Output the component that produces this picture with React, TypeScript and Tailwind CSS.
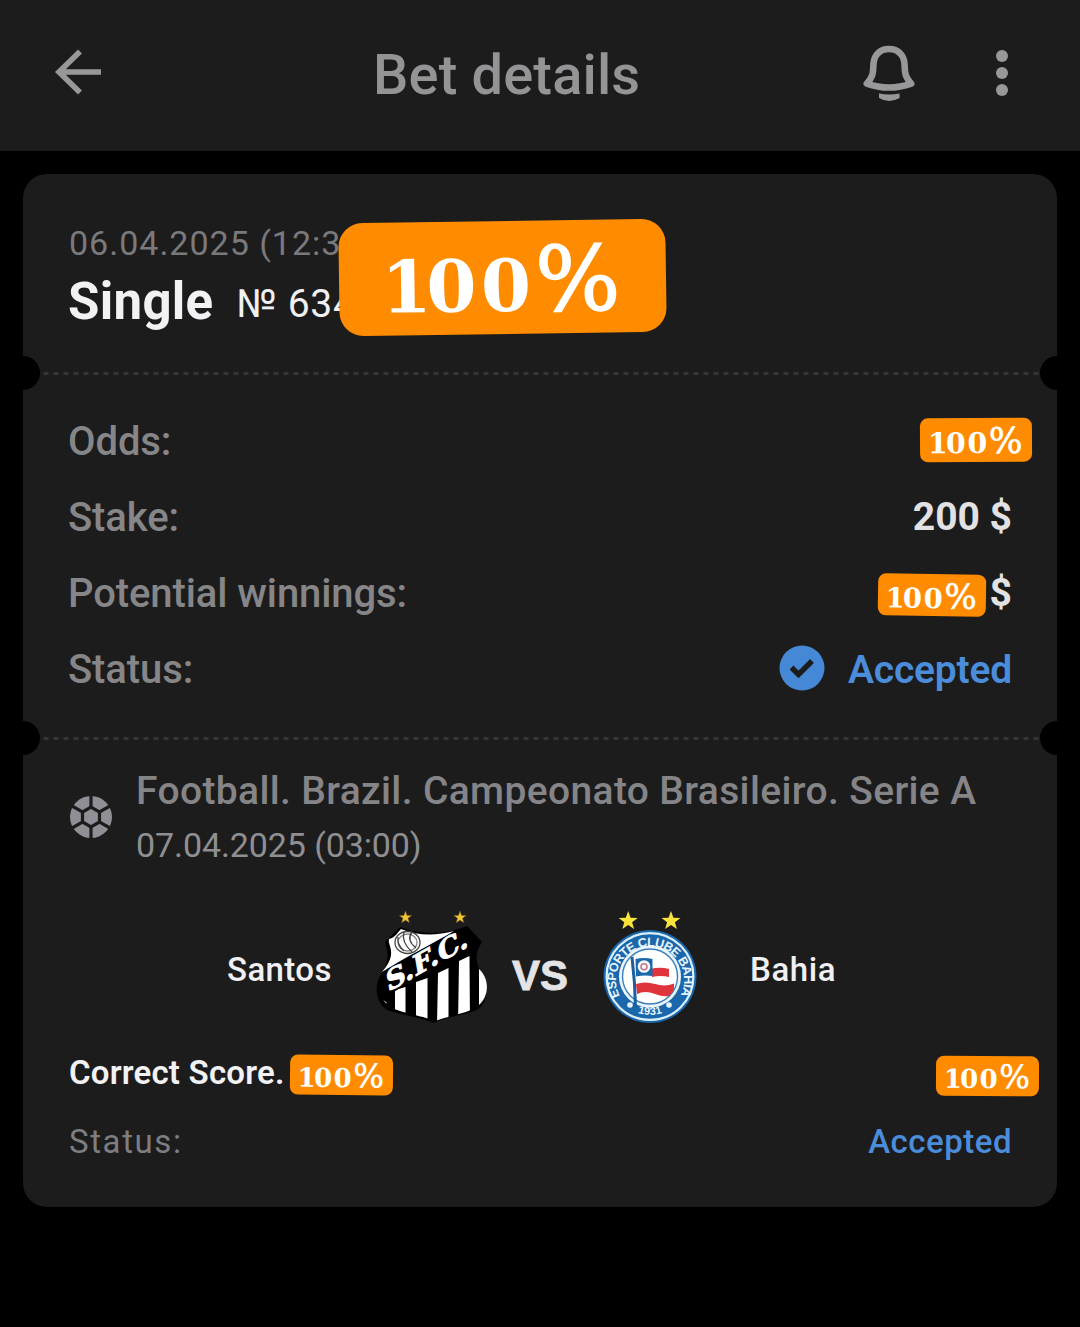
import React from "react";

const STAR = "M0,-10 L2.4,-3.2 9.5,-3.1 3.9,1.2 5.9,8.1 0,4 -5.9,8.1 -3.9,1.2 -9.5,-3.1 -2.4,-3.2 Z";

function HundredTag({ className }: { className: string }) {
  return (
    <div
      className={`flex items-center justify-center whitespace-nowrap bg-[#ff8c00] font-['DejaVu_Serif',serif] font-bold leading-none text-white ${className}`}
    >
      <span className="flex items-baseline pr-[0.05em] pt-[0.08em]">
        <span className="tracking-[-0.07em]">1</span>
        <span className="tracking-[0.06em]">00</span>
        <span className="text-[1.24em] font-normal leading-none [-webkit-text-stroke:0.018em_white]">%</span>
      </span>
    </div>
  );
}

function Divider() {
  return (
    <div className="flex h-[34px] items-center justify-between overflow-hidden">
      <div className="-ml-[17px] size-[34px] shrink-0 rounded-full bg-black" />
      <div className="mt-px h-[3px] flex-1 bg-[repeating-linear-gradient(90deg,transparent_0_3px,#353536_4px_8px,transparent_9px_10px)]" />
      <div className="-mr-[17px] size-[34px] shrink-0 rounded-full bg-black" />
    </div>
  );
}

function BackIcon() {
  return (
    <svg className="h-[48px] w-[48px]" viewBox="0 0 48 48" fill="none" stroke="#98989a" strokeWidth="5.6">
      <path d="M27 3.5 L6 24 L27 44.5 M6.5 24 H48" />
    </svg>
  );
}

function BellIcon() {
  return (
    <svg className="h-[60px] w-[56px]" viewBox="0 0 56 60" fill="none">
      <path
        d="M28 7 C18.5 7 12.6 13.5 12.4 23 C12.2 32.5 11.2 35.5 5.8 41.6 Q28 49.5 50.2 41.6 C44.8 35.5 43.8 32.5 43.6 23 C43.4 13.5 37.5 7 28 7 Z"
        stroke="#98989a"
        strokeWidth="6.6"
        strokeLinejoin="round"
      />
      <path d="M18 51.6 Q28 53.4 38.6 51.6 V56 Q28 62 18 56 Z" fill="#98989a" />
    </svg>
  );
}

function BallIcon() {
  return (
    <svg className="size-[44px]" viewBox="-22 -22 44 44">
      <circle r="21" fill="#8f8f95" />
      <g stroke="#1c1c1d" strokeWidth="3.2" fill="none">
        <path d="M0,-9.8 L8.5,-5 V5 L0,9.8 L-8.5,5 V-5 Z" />
        <path d="M0 -9.5 V-22 M0 9.5 V22 M8.2 -4.8 L19 -11 M8.2 4.8 L19 11 M-8.2 -4.8 L-19 -11 M-8.2 4.8 L-19 11" />
      </g>
    </svg>
  );
}

function SantosCrest() {
  return (
    <svg className="h-[130px] w-[120px]" viewBox="0 0 120 130">
      <defs>
        <clipPath id="santos-stripes">
          <path d="M13 99 L30 88 L60 73 L100 50 L101 68 C113 74 116 90 109 105 C100 113 82 115 65 121 C45 113 20 113 13 99 Z" />
        </clipPath>
      </defs>
      <path
        d="M30 27 C50 35 75 35 97 26 L112 42 C103 56 107 65 112 75 C120 92 116 104 107 110 C95 115 79 116 63 123 C47 116 30 115 17 110 C7 103 4 90 9 78 C16 66 19 60 17 50 L15 42 Z"
        fill="#000"
      />
      <path d="M31 29 C48 36 66 36 84 31 C62 44 36 57 12 72 C20 62 23 56 20 46 Q18 42 19 39 C26 37 27 33 31 29 Z" fill="#fff" />
      <g clipPath="url(#santos-stripes)" fill="#fff">
        <path d="M11 98 L17 103 L12 106 Z" />
        <path d="M25 90 L35.5 87 V124 H25 Z" />
        <path d="M46 82 L57.5 78 V126 H46 Z" />
        <path d="M68 73 L78.5 68 V126 H67 Z" />
        <path d="M89 61 L99.5 56 L100 126 H88 Z" />
      </g>
      <path d="M109 69 C119 78 120 95 109 105 Z" fill="#fff" />
      <g fill="none" stroke="#444" strokeWidth="1.3">
        <ellipse cx="37.5" cy="42.5" rx="12.5" ry="11" />
        <ellipse cx="37.5" cy="42.5" rx="9.5" ry="8.5" stroke="#888" />
        <path d="M34 32 Q31 42 42 52 M42 32 Q36 40 46 48 M28 37 Q27 45 34 51" />
      </g>
      <text
        transform="translate(18 92) rotate(-29.5) skewX(-20)"
        textLength="93"
        lengthAdjust="spacingAndGlyphs"
        fill="#fff"
        stroke="#fff"
        strokeWidth="0.8"
        fontFamily="'DejaVu Serif', serif"
        fontWeight="700"
        fontSize="26"
      >
        S.F.C.
      </text>
      <path d={STAR} fill="#f0c53a" stroke="#6b5412" strokeWidth="0.8" transform="translate(35.5 17.5) scale(.66)" />
      <path d={STAR} fill="#f0c53a" stroke="#6b5412" strokeWidth="0.8" transform="translate(90 17.5) scale(.66)" />
    </svg>
  );
}

function BahiaCrest() {
  return (
    <svg className="h-[130px] w-[110px]" viewBox="0 0 110 130">
      <defs>
        <path id="bahia-top" d="M25.8 97.7 A34 34 0 1 1 84.2 97.7" />
        <path id="bahia-bottom" d="M35 109.5 A40.5 40.5 0 0 0 75 109.5" />
        <clipPath id="bahia-flag">
          <circle cx="55" cy="77" r="27" />
        </clipPath>
      </defs>
      <circle cx="55" cy="76.5" r="46.5" fill="#1b67ab" />
      <circle cx="55" cy="76.5" r="43.4" fill="none" stroke="#d9f0fb" strokeWidth="2.2" />
      <circle cx="55" cy="76.5" r="31" fill="#e9f5fb" />
      <circle cx="55" cy="76.5" r="27.5" fill="#fff" stroke="#3f7fb5" strokeWidth="1.4" />
      <g clipPath="url(#bahia-flag)">
        <path d="M57 68.5 Q66 67 74 69 V77 Q66 75 57 77 Z" fill="#e0343c" />
        <path d="M41 84 Q50 81 60 84 T79 83.5 V95 Q70 98 60 94 T42 94 Z" fill="#e0343c" />
      </g>
      <path d="M40.5 59 Q49 57 57.5 59 V76 Q49 75 41 76.5 Z" fill="#1b67ab" />
      <circle cx="49" cy="66.5" r="6.3" fill="#f3f7fb" />
      <circle cx="49" cy="66.8" r="3" fill="none" stroke="#c8788c" strokeWidth="1.6" />
      <path d="M37 57 Q40 82 40.5 107" fill="none" stroke="#1b5f9e" strokeWidth="3" />
      <g fill="#e8f6fd" fontFamily="'Liberation Sans', sans-serif" fontWeight="700">
        <text fontSize="12.5" textLength="138">
          <textPath href="#bahia-top" startOffset="2">
            ESPORTE CLUBE BAHIA
          </textPath>
        </text>
        <text fontSize="11" textAnchor="middle">
          <textPath href="#bahia-bottom" startOffset="50%">
            1931
          </textPath>
        </text>
      </g>
      <circle cx="35" cy="105" r="2.8" fill="#e8f6fd" />
      <circle cx="74" cy="105" r="2.8" fill="#e8f6fd" />
      <path d={STAR} fill="#fbe43a" transform="translate(33.2 21)" />
      <path d={STAR} fill="#fbe43a" transform="translate(76 21)" />
    </svg>
  );
}

function DetailRow({ label, children }: { label: string; children: React.ReactNode }) {
  return (
    <div className="flex h-[76px] items-center justify-between">
      <span className="text-[40px] font-medium leading-[76px] tracking-[-0.1px] text-[#868688]">{label}</span>
      {children}
    </div>
  );
}

export default function App() {
  return (
    <div className="h-[1327px] w-[1080px] overflow-hidden bg-black font-[Roboto,sans-serif]">
      <header className="flex h-[151px] items-start bg-[#1c1c1d] pl-[53px]">
        <div className="mt-[48px] w-[320px]">
          <BackIcon />
        </div>
        <h1 className="mt-[39px] w-[488px] text-[56px] font-medium leading-[72px] tracking-[0.15px] text-[#949496]">Bet details</h1>
        <div className="mt-[42px]">
          <BellIcon />
        </div>
        <div className="ml-[79px] mt-[50px] flex flex-col gap-[5px]">
          <i className="size-[12px] rounded-full bg-[#98989a]" />
          <i className="size-[12px] rounded-full bg-[#98989a]" />
          <i className="size-[12px] rounded-full bg-[#98989a]" />
        </div>
      </header>

      <main className="relative mx-[23px] mt-[23px] h-[1033px] rounded-[24px] bg-[#1c1c1d]">
        <section className="h-[182px] pl-[46px] pt-[48px]">
          <p className="text-[34px] leading-[42px] tracking-[1px] text-[#7a7a7c]">06.04.2025 (12:3</p>
          <div className="flex h-[76px] items-center">
            <h2 className="-ml-px text-[51px] font-bold leading-[76px] tracking-[0.3px] text-[#f2f2f4]">Single</h2>
            <span className="ml-[23px] mt-[5px] whitespace-nowrap text-[39px] leading-[73px] tracking-[0.7px] text-[#f0f0f2]">№ 634</span>
          </div>
        </section>
        <HundredTag className="absolute left-[315.5px] top-[47px] h-[113px] w-[327px] -rotate-[0.8deg] rounded-[24px] text-[72px]" />

        <Divider />

        <section className="h-[331px] pl-[45px] pr-[45px] pt-[14px]">
          <DetailRow label="Odds:">
            <HundredTag className="-mr-[20px] -mt-[4px] h-[44px] w-[112px] -rotate-[0.4deg] rounded-[8px] text-[28.5px]" />
          </DetailRow>
          <DetailRow label="Stake:">
            <span className="-mt-[2px] text-[39px] font-bold text-[#e2e2e5]">200 $</span>
          </DetailRow>
          <DetailRow label="Potential winnings:">
            <div className="-mt-[2px] flex items-center gap-[4px]">
              <HundredTag className="mt-[3px] h-[42px] w-[108px] rotate-[0.8deg] rounded-[8px] text-[27.5px]" />
              <span className="text-[39px] font-bold text-[#e2e2e5]">$</span>
            </div>
          </DetailRow>
          <DetailRow label="Status:">
            <div className="flex items-center">
              <svg className="-mt-[5px] size-[46px]" viewBox="0 0 46 46">
                <circle cx="23" cy="23" r="22.5" fill="#4589d6" />
                <path d="M12.5 22.5 L19.5 29.5 L33 16" fill="none" stroke="#1c1c1d" strokeWidth="5.4" />
              </svg>
              <span className="ml-[23px] text-[39px] font-semibold tracking-[-0.2px] text-[#4b8ddb]">Accepted</span>
            </div>
          </DetailRow>
        </section>

        <Divider />

        <section className="pl-[46px] pr-[45px]">
          <div className="flex items-start pt-[9px]">
            <div className="mt-[31px]">
              <BallIcon />
            </div>
            <div className="ml-[23px] whitespace-nowrap">
              <p className="text-[39px] font-medium leading-[54px] tracking-[0.36px] text-[#858588]">
                Football. Brazil. Campeonato Brasileiro. Serie A
              </p>
              <p className="text-[34px] leading-[54px] tracking-[-0.1px] text-[#8f8f92]">07.04.2025 (03:00)</p>
            </div>
          </div>

          <div className="mt-[28px] flex h-[130px] items-center pl-[158px]">
            <span className="w-[143px] pt-[9px] text-[33px] font-medium tracking-[0.4px] text-[#f0f0f2]">Santos</span>
            <SantosCrest />
            <span className="ml-[22px] w-[83px] pt-[20px] font-['Liberation_Sans',sans-serif] text-[42px] font-bold text-[#e4e4e6] [-webkit-text-stroke:0.8px_#e4e4e6]">VS</span>
            <BahiaCrest />
            <span className="ml-[45px] pt-[9px] text-[33px] font-medium tracking-[0.6px] text-[#f0f0f2]">Bahia</span>
          </div>

          <div className="mt-[13px] flex h-[60px] items-center">
            <span className="text-[33px] font-semibold tracking-[0.2px] text-[#f2f2f4]">Correct Score.</span>
            <HundredTag className="ml-[6px] mt-[3px] h-[40px] w-[103px] rotate-[0.6deg] rounded-[8px] text-[26px]" />
            <HundredTag className="-mr-[27px] ml-auto mt-[5px] h-[40px] w-[103px] rotate-[0.3deg] rounded-[8px] text-[26px]" />
          </div>
          <div className="mt-[9px] flex h-[60px] items-center justify-between text-[33px]">
            <span className="tracking-[1.6px] text-[#7e7e80]">Status:</span>
            <span className="font-medium tracking-[0.5px] text-[#4b8ddb]">Accepted</span>
          </div>
        </section>
      </main>
    </div>
  );
}
